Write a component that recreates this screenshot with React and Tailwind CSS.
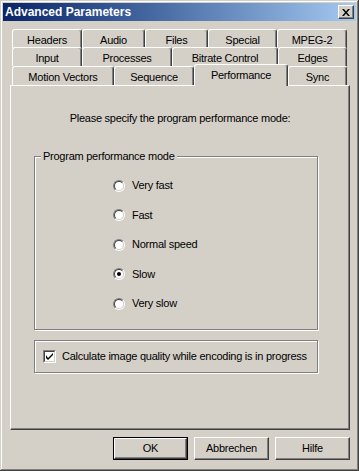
import clsx from "clsx";

const rows = [
  [
    { label: "Headers", w: "w-[70px]" },
    { label: "Audio", w: "w-[63px]" },
    { label: "Files", w: "w-[63px]" },
    { label: "Special", w: "w-[69px]" },
    { label: "MPEG-2", w: "w-[70px]" },
  ],
  [
    { label: "Input", w: "w-[70px]" },
    { label: "Processes", w: "w-[90px]" },
    { label: "Bitrate Control", w: "w-[106px]" },
    { label: "Edges", w: "w-[69px]" },
  ],
  [
    { label: "Motion Vectors", w: "w-[102px]" },
    { label: "Sequence", w: "w-[80px]" },
    { label: "Performance", w: "w-[94px]", active: true },
    { label: "Sync", w: "w-[59px]" },
  ],
];

const modes = ["Very fast", "Fast", "Normal speed", "Slow", "Very slow"];

function Tab({ label, w, active }) {
  return (
    <div
      className={clsx(
        "flex justify-center border-l border-t border-r border-white border-r-[#404040] rounded-t-[3px] shadow-[inset_-1px_0_#808080] bg-[#d4d0c8]",
        w,
        active ? "h-[22px] -mb-[1px] relative z-10 pt-[2px] items-start" : "h-[19px] items-center"
      )}
    >
      <span className={clsx(active ? "mt-[2px]" : "mt-[3px]")}>{label}</span>
    </div>
  );
}

function Radio({ checked }) {
  return (
    <div className="w-[12px] h-[12px] rounded-full border border-t-[#808080] border-l-[#808080] border-r-white border-b-white">
      <div className="w-full h-full rounded-full border border-t-[#404040] border-l-[#404040] border-r-[#d4d0c8] border-b-[#d4d0c8] bg-white flex items-center justify-center">
        {checked && <div className="w-[4px] h-[4px] rounded-full bg-black" />}
      </div>
    </div>
  );
}

function Button({ label, def }) {
  return (
    <div
      className={clsx(
        "w-[75px] h-[23px] flex items-center justify-center",
        def && "border border-black"
      )}
    >
      <div className="w-full h-full flex items-center justify-center border border-white border-r-[#404040] border-b-[#404040] shadow-[inset_-1px_-1px_#808080]">
        {label}
      </div>
    </div>
  );
}

export default function App() {
  return (
    <div className="w-[359px] h-[471px] bg-[#d4d0c8] shadow-[inset_-1px_-1px_#404040,inset_1px_1px_#d4d0c8,inset_-2px_-2px_#808080,inset_2px_2px_#fff] font-['Liberation_Sans',sans-serif] text-[11px] leading-[13px] tracking-[-0.25px] text-black overflow-hidden whitespace-nowrap">
      <div className="mx-[3px] mt-[3px] h-[18px] bg-gradient-to-r from-[#0a246a] to-[#a6caf0] flex items-center justify-between pl-[2px] pr-[2px]">
        <span className="text-white font-bold text-[12px] leading-[14px] tracking-normal">Advanced Parameters</span>
        <div className="w-[16px] h-[14px] bg-[#d4d0c8] border border-white border-r-[#404040] border-b-[#404040] shadow-[inset_-1px_-1px_#808080] flex items-center justify-center">
          <svg width="8" height="7" viewBox="0 0 8 7">
            <path d="M0 0h2l2 2.5L6 0h2L5 3.5 8 7H6L4 4.5 2 7H0l3-3.5z" fill="#000" />
          </svg>
        </div>
      </div>

      <div className="ml-[12px] mt-[9px]">
        <div className="flex h-[18px] items-end">
          {rows[0].map((t) => (
            <Tab key={t.label} {...t} />
          ))}
        </div>
        <div className="flex h-[18px] items-end">
          {rows[1].map((t) => (
            <Tab key={t.label} {...t} />
          ))}
        </div>
        <div className="flex h-[19px] items-end">
          {rows[2].map((t) => (
            <Tab key={t.label} {...t} />
          ))}
        </div>
      </div>

      <div className="ml-[10px] w-[340px] h-[345px] border border-white border-r-[#404040] border-b-[#404040] shadow-[inset_-1px_-1px_#808080]">
        <p className="text-center mt-[26px]">Please specify the program performance mode:</p>

        <fieldset className="ml-[23px] mt-[25px] w-[284px] h-[180px] border border-[#808080] shadow-[inset_1px_1px_#fff,1px_1px_#fff]">
          <legend className="ml-[6px] px-[2px] bg-[#d4d0c8]">Program performance mode</legend>
          <div className="flex flex-col gap-[16.5px] pl-[78px] mt-[16px]">
            {modes.map((m) => (
              <div key={m} className="flex items-center h-[13px] gap-[7px]">
                <Radio checked={m === "Slow"} />
                <span>{m}</span>
              </div>
            ))}
          </div>
        </fieldset>

        <div className="ml-[23px] mt-[10px] w-[284px] h-[33px] border border-[#808080] shadow-[inset_1px_1px_#fff,1px_1px_#fff] flex items-center pl-[8px] gap-[6px]">
          <div className="w-[13px] h-[13px] border border-t-[#808080] border-l-[#808080] border-r-white border-b-white">
            <div className="w-full h-full bg-white border border-t-[#404040] border-l-[#404040] border-r-[#d4d0c8] border-b-[#d4d0c8] flex items-center justify-center">
              <svg width="7" height="7" viewBox="0 0 7 7">
                <path d="M0 2v3l2 2L7 2V0L2 5z" fill="#000" />
              </svg>
            </div>
          </div>
          <span>Calculate image quality while encoding is in progress</span>
        </div>
      </div>

      <div className="flex justify-end gap-[6px] mt-[7px] pr-[9px]">
        <Button label="OK" def />
        <Button label="Abbrechen" />
        <Button label="Hilfe" />
      </div>
    </div>
  );
}
